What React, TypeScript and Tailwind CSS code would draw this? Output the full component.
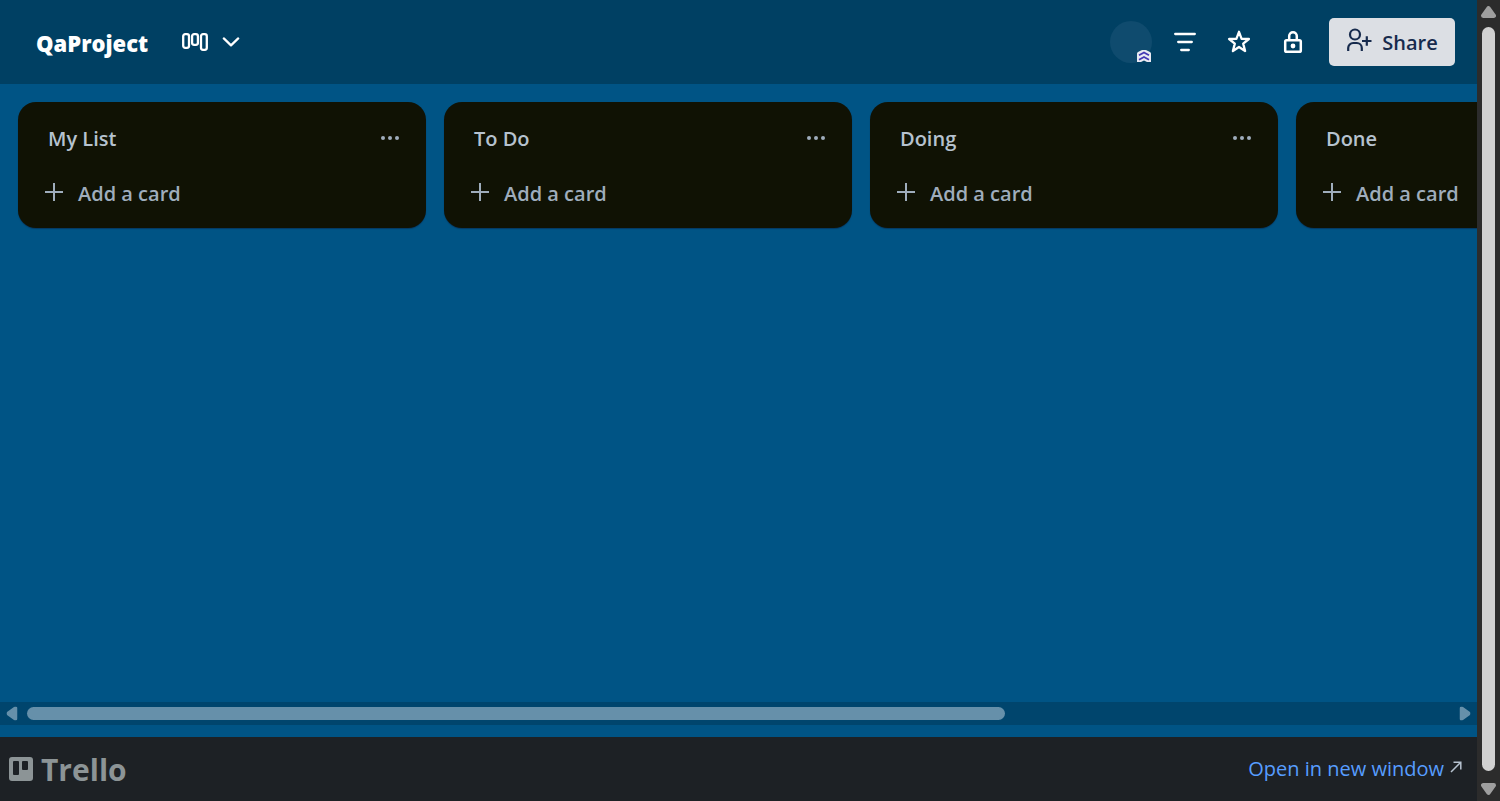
const lists = ['My List', 'To Do', 'Doing', 'Done'];

function BoardIcon() {
  return (
    <svg className="h-[18px] w-[26px]" viewBox="0 0 26 18" fill="none" stroke="currentColor" strokeWidth="2.3" aria-hidden="true">
      <rect x="1.200" y="1.200" width="5.800" height="13.600" rx="2" />
      <rect x="10.100" y="1.200" width="5.800" height="10.600" rx="2" />
      <rect x="19" y="1.200" width="5.800" height="15.600" rx="2" />
    </svg>
  );
}

function ChevronIcon() {
  return (
    <svg className="h-[10px] w-[18px]" viewBox="0 0 18 10" fill="none" stroke="currentColor" strokeWidth="2.2" strokeLinecap="round" strokeLinejoin="round" aria-hidden="true">
      <path d="M1.800 1.400 9 8.400l7.200-7" />
    </svg>
  );
}

function FilterIcon() {
  return (
    <svg className="size-6" viewBox="0 0 24 24" fill="none" stroke="currentColor" strokeWidth="2.3" strokeLinecap="round" aria-hidden="true">
      <path d="M2.200 4h19.600M5.200 12h13.600M8.200 20h7.600" />
    </svg>
  );
}

function StarIcon() {
  return (
    <svg className="size-6" viewBox="0 0 24 24" fill="none" stroke="currentColor" strokeWidth="2.3" strokeLinejoin="round" aria-hidden="true">
      <path d="m12 1.800 2.600 7 7.300.200-5.700 4.600 1.900 7.400-6.100-4-6.100 4 1.900-7.400L2.100 9l7.300-.200z" />
    </svg>
  );
}

function LockIcon() {
  return (
    <svg className="size-6" viewBox="0 0 24 24" fill="none" stroke="currentColor" strokeWidth="2.5" aria-hidden="true">
      <rect x="4.200" y="10.200" width="15.600" height="11.600" rx="1.400" />
      <path d="M8.200 10V6a3.800 3.800 0 0 1 7.600 0v4" />
      <circle cx="12" cy="16" r="2.400" fill="currentColor" stroke="none" />
    </svg>
  );
}

function ShareIcon() {
  return (
    <svg className="h-6 w-[26px]" viewBox="0 0 26 24" fill="none" stroke="currentColor" strokeWidth="2.200" aria-hidden="true">
      <circle cx="9" cy="6.500" r="5" />
      <path d="M2.200 23v-3a5 5 0 0 1 5-5h3.600a5 5 0 0 1 5 5v3M16 13h9.500M20.800 8.300v9.400" />
    </svg>
  );
}

function AdminBadge() {
  return (
    <svg className="absolute right-px bottom-px h-3 w-[14px]" viewBox="0 0 14 12" aria-hidden="true">
      <path d="M0 12V3.500Q0 2.500 1 2L4.500.300Q5 0 5.500 0h3q.500 0 1 .300L13 2q1 .500 1 1.500V12h-4L7 10.500 4 12z" fill="#e8e9f2" />
      <path d="M2 5.300 7 2.500l5 2.800M2 9.800 7 7l5 2.800" fill="none" stroke="#4338b4" strokeWidth="1.700" />
    </svg>
  );
}

function TrelloIcon() {
  return (
    <svg className="size-6" viewBox="0 0 24 24" aria-hidden="true">
      <path fillRule="evenodd" fill="currentColor" d="M3 0h18a3 3 0 0 1 3 3v18a3 3 0 0 1-3 3H3a3 3 0 0 1-3-3V3a3 3 0 0 1 3-3Zm2 4a1 1 0 0 0-1 1v12a1 1 0 0 0 1 1h4a1 1 0 0 0 1-1V5a1 1 0 0 0-1-1Zm9 0a1 1 0 0 0-1 1v7a1 1 0 0 0 1 1h4a1 1 0 0 0 1-1V5a1 1 0 0 0-1-1Z" />
    </svg>
  );
}

function Arrow({ className }: { className: string }) {
  return (
    <svg className={className} viewBox="0 0 14 11" aria-hidden="true">
      <path d="M7 2 12 9H2z" fill="currentColor" stroke="currentColor" strokeWidth="4" strokeLinejoin="round" />
    </svg>
  );
}

function List({ title }: { title: string }) {
  return (
    <section className="w-[408px] shrink-0 rounded-[18px] bg-[#101204] px-3 pt-3 pb-3 shadow-[0_1px_1px_#091e4280]">
      <div className="flex h-[50px] items-center justify-between pr-3 pl-[18px]">
        <h2 className="text-[20px] leading-[30px] font-semibold text-[#b6c2cf]">{title}</h2>
        <button type="button" aria-label={`${title} actions`} className="pb-[3px] text-[#9fadbc]">
          <svg className="h-[6px] w-6" viewBox="0 0 24 6" fill="currentColor" aria-hidden="true">
            <circle cx="5" cy="3" r="2" />
            <circle cx="12" cy="3" r="2" />
            <circle cx="19" cy="3" r="2" />
          </svg>
        </button>
      </div>
      <button type="button" className="mt-[7px] flex h-[45px] w-full items-center gap-[15px] pl-[15px] text-[20px] leading-[30px] font-semibold whitespace-nowrap text-[#9fadbc]">
        <svg className="mb-[3px] size-[18px]" viewBox="0 0 18 18" fill="none" stroke="currentColor" strokeWidth="2" aria-hidden="true">
          <path d="M0 9h18M9 0v18" />
        </svg>
        Add a card
      </button>
    </section>
  );
}

export default function App() {
  return (
    <div className="flex h-screen overflow-hidden font-['Open_Sans','Noto_Sans',sans-serif]">
      <div className="flex min-w-0 flex-1 flex-col bg-[#005485]">
        <header className="flex h-[84px] shrink-0 items-center bg-[#004063] pr-[22px] pl-9 text-white">
          <h1 className="pt-[2px] text-[22px] leading-[30px] font-extrabold">QaProject</h1>
          <button type="button" aria-label="Board views" className="ml-[34px] flex items-center gap-[14px]">
            <BoardIcon />
            <ChevronIcon />
          </button>
          <div className="ml-auto flex items-center">
            <button type="button" aria-label="Member" className="relative mr-[21px] size-[42px]">
              <span className="block size-[42px] rounded-full bg-[#0f4b6e]" />
              <AdminBadge />
            </button>
            <div className="mr-6 flex gap-[30px]">
              <button type="button" aria-label="Filter"><FilterIcon /></button>
              <button type="button" aria-label="Star board"><StarIcon /></button>
              <button type="button" aria-label="Change visibility"><LockIcon /></button>
            </div>
            <button type="button" className="flex h-12 w-[126px] items-center justify-center gap-[10px] rounded-[5px] bg-[#dcdfe4] text-[20px] leading-[30px] font-semibold text-[#172b4d]">
              <span className="pb-1"><ShareIcon /></span>
              <span className="pt-[2px]">Share</span>
            </button>
          </div>
        </header>
        <main className="flex min-h-0 flex-1 flex-col pb-3">
          <div className="flex flex-1 items-start gap-[18px] overflow-hidden p-[18px]">
            {lists.map((title) => (
              <List key={title} title={title} />
            ))}
          </div>
          <div className="flex h-[23px] shrink-0 items-center gap-2 bg-[#00456d] px-[5px] text-[#6690aa]">
            <Arrow className="h-[11px] w-[14px] -rotate-90" />
            <div className="h-[13px] flex-1">
              <div className="h-full w-[68.7%] rounded-full bg-[#6690aa]" />
            </div>
            <Arrow className="h-[11px] w-[14px] rotate-90" />
          </div>
        </main>
        <footer className="flex h-16 shrink-0 items-center justify-between bg-[#1d2125] pr-[15px] pl-[9px]">
          <a href="#trello" className="flex items-center gap-2 text-[#8c9496]">
            <TrelloIcon />
            <span className="pt-[2px] text-[30px] leading-10 font-bold">Trello</span>
          </a>
          <a href="#open" className="flex items-center gap-[6px] text-[20px] leading-[30px] text-[#579dff]">
            Open in new window
            <svg className="mb-1 size-3 text-[#b6c2cf]" viewBox="0 0 12 12" fill="none" stroke="currentColor" strokeWidth="1.500" aria-hidden="true">
              <path d="M1 11 10.500 1.500M3.500 1.200h7.300v7.300" />
            </svg>
          </a>
        </footer>
      </div>
      <div className="flex w-[23px] shrink-0 flex-col items-center bg-[#2c2c2c] py-[6px] text-[#9f9f9f]">
        <Arrow className="h-3 w-[15px]" />
        <div className="mt-[9px] mb-3 w-[13px] flex-1 rounded-full bg-[#d1d1d1]" />
        <Arrow className="h-3 w-[15px] rotate-180" />
      </div>
    </div>
  );
}
